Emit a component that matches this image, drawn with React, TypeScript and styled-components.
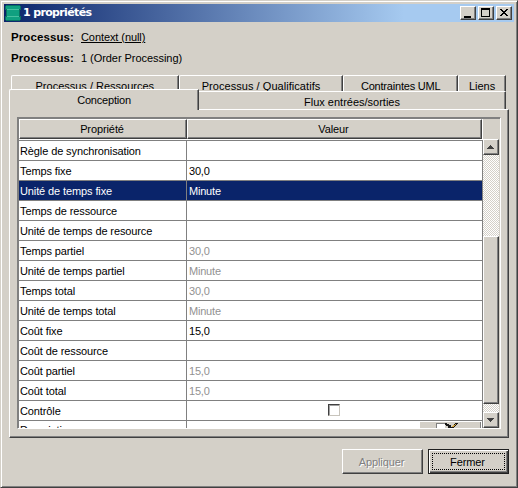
import React from 'react';
import styled, { createGlobalStyle, css } from 'styled-components';

const face = '#d4d0c8';
const shadow = '#808080';
const dark = '#404040';
const navy = '#0a246a';

const GlobalStyle = createGlobalStyle`
  *, *::before, *::after { box-sizing: border-box; }
  html, body { margin: 0; overflow: hidden; }
  body { font: 11px/14px "Liberation Sans", Arial, sans-serif; color: #000; background: ${face}; }
`;

const raised = css`
  border: 1px solid;
  border-color: #fff ${dark} ${dark} #fff;
  box-shadow: inset -1px -1px 0 ${shadow};
`;

const Window = styled.main`
  display: flex;
  flex-direction: column;
  width: 518px;
  height: 488px;
  padding: 2px;
  background: ${face};
  border: 1px solid;
  border-color: ${face} ${dark} ${dark} ${face};
  box-shadow: inset 1px 1px 0 #fff, inset -1px -1px 0 ${shadow};
`;

const TitleBar = styled.header`
  display: flex;
  align-items: center;
  height: 18px;
  margin: 1px 1px 0;
  padding: 0 2px 0 1px;
  background: linear-gradient(90deg, ${navy}, #a6caf0 400px);
`;

const Title = styled.h1`
  flex: 1;
  margin: 0 0 0 2px;
  font: bold 11px/18px "DejaVu Sans", Verdana, sans-serif;
  letter-spacing: -0.65px;
  color: #fff;
`;

const CaptionButton = styled.button`
  ${raised}
  display: block;
  width: 16px;
  height: 14px;
  margin: 0 0 0 2px;
  padding: 0;
  background: ${face};
  svg { display: block; }
`;

const Info = styled.section`
  height: 53px;
  padding: 8px 0 0 8px;
`;

const InfoLine = styled.div`
  display: flex;
  height: 21px;
  line-height: 14px;
`;

const InfoLabel = styled.strong`
  width: 70px;
  font-size: 11.5px;
  letter-spacing: 0.1px;
`;

const InfoLink = styled.span`
  text-decoration: underline;
  text-underline-offset: 1px;
  letter-spacing: -0.08px;
`;

const InfoValue = styled.span`
  letter-spacing: -0.05px;
`;

const BackTabs = styled.div`
  display: flex;
  height: 16px;
  margin: 0 9px 0 8px;
`;

const BackTab = styled.div<{ $width: number; $spacing?: number }>`
  width: ${p => p.$width}px;
  height: 16px;
  padding-top: 3px;
  overflow: hidden;
  text-align: center;
  letter-spacing: ${p => p.$spacing ?? 0}px;
  border: 1px solid;
  border-color: #fff ${dark} transparent #fff;
  border-bottom: 0;
  border-top-left-radius: 2px;
  box-shadow: inset -1px 0 0 ${shadow};
`;

const FrontTabs = styled.div`
  display: flex;
  align-items: flex-end;
  height: 20px;
  margin: -2px 9px 0 6px;
`;

const ActiveTab = styled.div`
  position: relative;
  width: 190px;
  height: 21px;
  margin-bottom: -1px;
  padding-top: 3px;
  text-align: center;
  letter-spacing: -0.2px;
  background: ${face};
  border: 1px solid;
  border-color: #fff ${dark} transparent #fff;
  border-bottom: 0;
  border-top-left-radius: 2px;
  box-shadow: inset -1px 0 0 ${shadow};
`;

const FrontTab = styled.div`
  flex: 1;
  height: 18px;
  padding-top: 3px;
  text-align: center;
  background: ${face};
  border-top: 1px solid #fff;
  border-right: 1px solid ${dark};
  box-shadow: inset -1px 0 0 ${shadow};
`;

const Panel = styled.section`
  ${raised}
  height: 329px;
  margin: 0 6px;
  padding: 7px;
`;

const ScrollPane = styled.div`
  display: flex;
  width: 484px;
  height: 312px;
  padding: 1px 1px 0;
  border: 1px solid;
  border-color: ${shadow} #fff #fff ${shadow};
  box-shadow: inset 1px 1px 0 ${shadow};
`;

const TableArea = styled.div`
  width: 464px;
  height: 309px;
  overflow: hidden;
`;

const HeaderRow = styled.div`
  display: flex;
  height: 21px;
  background: #fff;
`;

const HeaderCell = styled.div<{ $width: number }>`
  ${raised}
  width: ${p => p.$width}px;
  height: 20px;
  padding: 2px 2px 0 0;
  text-align: center;
  letter-spacing: -0.1px;
  background: ${face};
`;

const Row = styled.div<{ $selected?: boolean }>`
  display: grid;
  grid-template-columns: 168px 296px;
  height: 20px;
  color: ${p => (p.$selected ? '#fff' : '#000')};
  background: ${p => (p.$selected ? navy : '#fff')};
`;

const NameCell = styled.div<{ $raised?: boolean }>`
  padding: ${p => (p.$raised ? 2 : 3)}px 0 0 1px;
  border: solid ${shadow};
  border-width: 1px 1px 0 0;
  letter-spacing: -0.11px;
  white-space: nowrap;
`;

const ValueCell = styled.div<{ $muted?: boolean }>`
  display: flex;
  padding: 3px 0 0 2px;
  border: solid ${shadow};
  border-width: 1px 1px 0 0;
  letter-spacing: -0.2px;
  color: ${p => (p.$muted ? '#929292' : 'inherit')};
`;

const Checkbox = styled.span`
  width: 12px;
  height: 12px;
  margin-left: 139px;
  background: #fff;
  border: 1px solid;
  border-color: ${dark} #c8c4bc #c8c4bc ${dark};
  box-shadow: inset 1px 1px 0 #a0a0a0;
`;

const EditButton = styled.span`
  display: flex;
  width: 61px;
  height: 20px;
  margin: -2px 0 0 231px;
  padding-left: 15px;
  background: ${face};
  border-right: 1px solid ${shadow};
`;

const ScrollBar = styled.div`
  display: flex;
  flex-direction: column;
  width: 16px;
  margin-top: 20px;
  background: conic-gradient(#fff 25%, ${face} 0 50%, #fff 0 75%, ${face} 0) 0 0 / 2px 2px;
`;

const Arrow = styled.span`
  ${raised}
  display: flex;
  height: 16px;
  background: ${face};
`;

const Thumb = styled.span`
  ${raised}
  height: 168px;
  margin: 81px 0 auto;
  background: ${face};
`;

const Actions = styled.footer`
  display: flex;
  justify-content: flex-end;
  gap: 5px;
  margin: 11px 6px 0 0;
`;

const ActionButton = styled.button<{ $focused?: boolean }>`
  ${raised}
  display: flex;
  align-items: center;
  justify-content: center;
  width: 81px;
  height: 25px;
  padding: 0 2px 0 0;
  font: inherit;
  letter-spacing: -0.1px;
  color: #000;
  background: ${face};
  &:disabled { color: ${shadow}; text-shadow: 1px 1px 0 #fff; }
  ${p => p.$focused && css`
    padding: 0;
    border-color: #202020;
    box-shadow: inset 1px 1px 0 #fff, inset -1px -1px 0 ${dark}, inset -2px -2px 0 ${shadow};
  `}
`;

const FocusRing = styled.span`
  display: flex;
  align-items: center;
  justify-content: center;
  width: 73px;
  height: 17px;
  padding-right: 2px;
  border: 1px dotted #000;
`;

type Property = { name: string; value?: string; muted?: boolean; selected?: boolean; kind?: 'check' | 'edit' };

const properties: Property[] = [
  { name: 'Règle de synchronisation' },
  { name: 'Temps fixe', value: '30,0' },
  { name: 'Unité de temps fixe', value: 'Minute', selected: true },
  { name: 'Temps de ressource' },
  { name: 'Unité de temps de resource' },
  { name: 'Temps partiel', value: '30,0', muted: true },
  { name: 'Unité de temps partiel', value: 'Minute', muted: true },
  { name: 'Temps total', value: '30,0', muted: true },
  { name: 'Unité de temps total', value: 'Minute', muted: true },
  { name: 'Coût fixe', value: '15,0' },
  { name: 'Coût de ressource' },
  { name: 'Coût partiel', value: '15,0', muted: true },
  { name: 'Coût total', value: '15,0', muted: true },
  { name: 'Contrôle', kind: 'check' },
  { name: 'Description', kind: 'edit' },
];

const AppIcon = () => (
  <svg width="16" height="16" shapeRendering="crispEdges">
    <path d="M1 0h14v1h1v4h-1v6h1v4h-1v1H1v-1H0v-4h1V5H0V1h1z" fill="#087060" />
    <path d="M1 1h14v3H1zM2 5h12v6H2zM1 12h14v3H1z" fill="#10a080" />
    <path d="M2 4h12v1H2zM2 11h12v1H2z" fill="#48c0a0" />
  </svg>
);

const PencilIcon = () => (
  <svg width="24" height="7" shapeRendering="crispEdges">
    <path d="M1 1h9v6H1z" fill="#808080" />
    <path d="M2 2h8v5H2z" fill="#fff" />
    <path d="M10 1h2v1h2v1h2v2h-1v1h-2V4h-2V3h-1zM20 1h3v1h-1v1h-1v1h-1v1h-1v1h-4V5h2V4h2V2h1z" fill="#181818" />
    <path d="M20 2h1v1h-1zM18 3h2v1h-1v1h-2V4h1z" fill="#d8a638" />
  </svg>
);

export default function App() {
  return (
    <>
      <GlobalStyle />
      <Window>
        <TitleBar>
          <AppIcon />
          <Title>1 propriétés</Title>
          <CaptionButton aria-label="Réduire">
            <svg width="14" height="12" shapeRendering="crispEdges"><path d="M3 9h7v2H3z" /></svg>
          </CaptionButton>
          <CaptionButton aria-label="Agrandir">
            <svg width="14" height="12" shapeRendering="crispEdges"><path d="M2 1h9v9H2zM3 3v6h7V3z" fillRule="evenodd" /></svg>
          </CaptionButton>
          <CaptionButton aria-label="Fermer la fenêtre">
            <svg width="14" height="12" shapeRendering="crispEdges">
              <path d="M3 2h2v1h1v1h2V3h1V2h2v1h-1v1H9v1H8v1h1v1h1v1h1v1H9V8H8V7H6v1H5v1H3V8h1V7h1V6h1V5H5V4H4V3H3z" />
            </svg>
          </CaptionButton>
        </TitleBar>
        <Info>
          <InfoLine><InfoLabel>Processus:</InfoLabel><InfoLink>Context (null)</InfoLink></InfoLine>
          <InfoLine><InfoLabel>Processus:</InfoLabel><InfoValue>1 (Order Processing)</InfoValue></InfoLine>
        </Info>
        <BackTabs>
          <BackTab $width={168}>Processus / Ressources</BackTab>
          <BackTab $width={165} $spacing={0.05}>Processus / Qualificatifs</BackTab>
          <BackTab $width={115} $spacing={-0.2}>Contraintes UML</BackTab>
          <BackTab $width={48}>Liens</BackTab>
        </BackTabs>
        <FrontTabs>
          <ActiveTab>Conception</ActiveTab>
          <FrontTab>Flux entrées/sorties</FrontTab>
        </FrontTabs>
        <Panel>
          <ScrollPane>
            <TableArea>
              <HeaderRow>
                <HeaderCell $width={168}>Propriété</HeaderCell>
                <HeaderCell $width={295}>Valeur</HeaderCell>
              </HeaderRow>
              {properties.map(p => (
                <Row key={p.name} $selected={p.selected}>
                  <NameCell $raised={p.kind === 'edit'}>{p.name}</NameCell>
                  <ValueCell $muted={p.muted}>
                    {p.value}
                    {p.kind === 'check' && <Checkbox />}
                    {p.kind === 'edit' && <EditButton><PencilIcon /></EditButton>}
                  </ValueCell>
                </Row>
              ))}
            </TableArea>
            <ScrollBar>
              <Arrow><svg width="14" height="14" shapeRendering="crispEdges"><path d="M6 5h1v1h1v1h1v1h1v1H3V8h1V7h1V6h1z" fill={dark} /></svg></Arrow>
              <Thumb />
              <Arrow><svg width="14" height="14" shapeRendering="crispEdges"><path d="M3 5h7v1H9v1H8v1H7v1H6V8H5V7H4V6H3z" fill={dark} /></svg></Arrow>
            </ScrollBar>
          </ScrollPane>
        </Panel>
        <Actions>
          <ActionButton disabled>Appliquer</ActionButton>
          <ActionButton $focused><FocusRing>Fermer</FocusRing></ActionButton>
        </Actions>
      </Window>
    </>
  );
}
